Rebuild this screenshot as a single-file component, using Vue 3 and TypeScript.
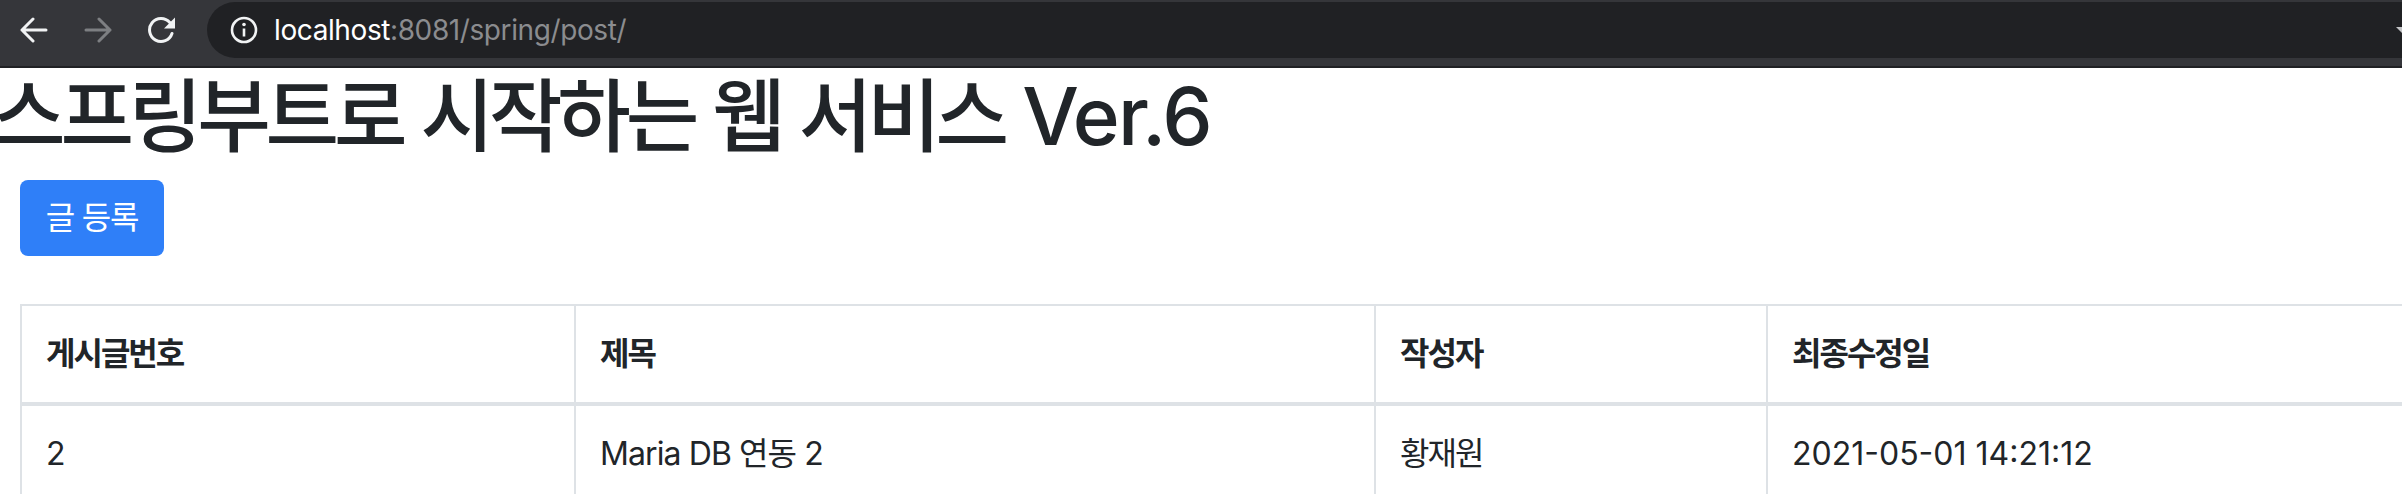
<script setup lang="ts">
interface Post {
  id: number;
  title: string;
  author: string;
  modified: string;
}

const posts: Post[] = [
  { id: 2, title: 'Maria DB 연동 2', author: '황재원', modified: '2021-05-01 14:21:12' },
];
</script>

<template>
  <div class="page">
    <div class="toolbar">
      <svg class="nav back" width="28" height="28" viewBox="0 0 28 28">
        <path d="M26 14H2M13 3 2 14l11 11" />
      </svg>
      <svg class="nav forward" width="28" height="28" viewBox="0 0 28 28">
        <path d="M2 14h24M15 3l11 11-11 11" />
      </svg>
      <svg class="nav reload" width="30" height="28" viewBox="0 0 30 28">
        <path d="M24 17.5A11.5 11.5 0 1 1 21.8 6.5" />
        <path class="solid" d="M27 1.5V12.500H16z" />
      </svg>
      <div class="omnibox">
        <svg class="info" width="28" height="28" viewBox="0 0 28 28">
          <circle cx="14" cy="14" r="12" />
          <path d="M14 12.500v8" />
          <circle class="dot" cx="14" cy="8.500" r="1.800" />
        </svg>
        <span class="url">localhost<span class="url-dim">:8081/spring/post/</span></span>
        <svg class="caret" width="6" height="10" viewBox="0 0 6 10">
          <path d="M0 2H10L6 8z" />
        </svg>
      </div>
    </div>

    <h1 class="title">스프링부트로 시작하는 웹 서비스 <span class="version">Ver.6</span></h1>
    <a class="btn">글 등록</a>

    <table class="posts">
      <colgroup>
        <col style="width: 554px" />
        <col style="width: 800px" />
        <col style="width: 392px" />
        <col style="width: 800px" />
      </colgroup>
      <thead>
        <tr>
          <th>게시글번호</th>
          <th>제목</th>
          <th>작성자</th>
          <th>최종수정일</th>
        </tr>
      </thead>
      <tbody>
        <tr v-for="post in posts" :key="post.id">
          <td>{{ post.id }}</td>
          <td class="post-title">{{ post.title }}</td>
          <td class="post-author">{{ post.author }}</td>
          <td>{{ post.modified }}</td>
        </tr>
      </tbody>
    </table>
  </div>
</template>

<style>
html,
body {
  margin: 0;
  background: #fff;
  overflow: hidden;
}
</style>

<style scoped>
.page {
  width: 2402px;
  height: 494px;
  overflow: hidden;
  font-family: Inter, "Noto Sans CJK KR", sans-serif;
  color: #212529;
}

.toolbar {
  display: flex;
  align-items: flex-start;
  height: 64px;
  padding-top: 2px;
  background: #35363a;
  border-bottom: 2px solid #202124;
}

.nav {
  flex: none;
  margin-top: 14px;
  fill: none;
  stroke: #f1f3f4;
  stroke-width: 3;
  stroke-linecap: round;
  stroke-linejoin: round;
}

.nav .solid {
  fill: #f1f3f4;
  stroke: none;
}

.back {
  margin-left: 20px;
}

.forward {
  margin-left: 36px;
  stroke: #7d7f82;
}

.reload {
  margin-left: 36px;
}

.omnibox {
  display: flex;
  align-items: center;
  flex: 1;
  height: 56px;
  margin-left: 29px;
  padding-left: 23px;
  border-radius: 28px 0 0 28px;
  background: #202124;
}

.info {
  flex: none;
  fill: none;
  stroke: #f1f3f4;
  stroke-width: 2.600;
}

.info .dot {
  fill: #f1f3f4;
  stroke: none;
}

.url {
  margin-left: 16px;
  font-size: 28px;
  letter-spacing: -0.4px;
  color: #fff;
}

.url-dim {
  color: #8b8c8f;
}

.caret {
  margin-left: auto;
  fill: #c4c5c7;
}

.title {
  margin: 0 0 0 -8px;
  height: 112px;
  font-size: 80px;
  font-weight: 500;
  line-height: 96px;
  letter-spacing: -5.2px;
  word-spacing: 2px;
  white-space: nowrap;
}

.version {
  letter-spacing: -1.8px;
}

.btn {
  display: block;
  width: 144px;
  height: 76px;
  margin-left: 20px;
  border-radius: 8px;
  background: #2f7ff8;
  color: #fff;
  font-size: 32px;
  letter-spacing: -1.2px;
  line-height: 76px;
  text-align: center;
}

.posts {
  width: 2546px;
  margin: 48px 0 0 20px;
  table-layout: fixed;
  border-collapse: collapse;
  font-size: 32px;
}

.posts th,
.posts td {
  padding: 24px;
  border: 2px solid #dee2e6;
  text-align: left;
  line-height: 48px;
}

.posts th {
  font-weight: 700;
  letter-spacing: -2px;
  border-bottom-width: 4px;
}

.posts .post-title {
  letter-spacing: -0.9px;
}

.posts .post-author {
  letter-spacing: -2px;
}
</style>
